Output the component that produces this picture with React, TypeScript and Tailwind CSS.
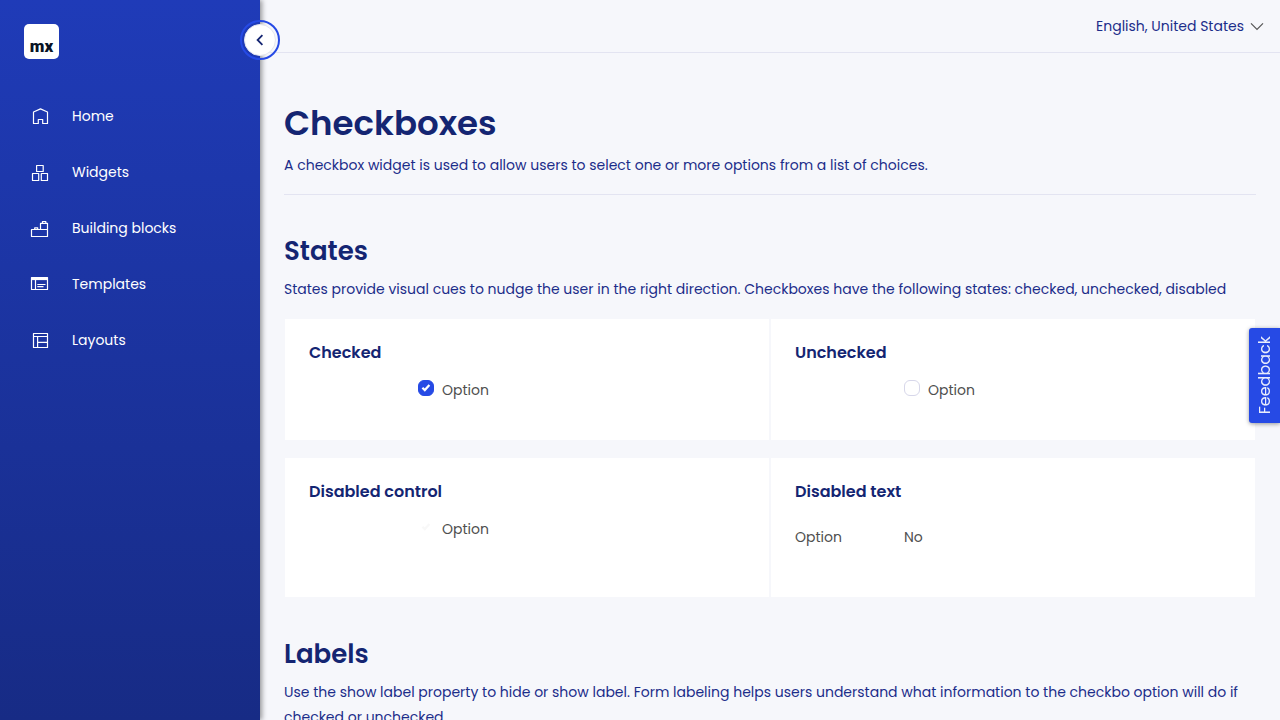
import { useState } from 'react';
import type { ReactNode } from 'react';

function NavIcon({ children }: { children: ReactNode }) {
  return (
    <svg
      viewBox="0 0 20 20"
      className="h-5 w-5 shrink-0"
      fill="none"
      stroke="currentColor"
      strokeWidth="1.2"
      strokeLinejoin="round"
      aria-hidden="true"
    >
      {children}
    </svg>
  );
}

const navItems: { label: string; icon: ReactNode }[] = [
  {
    label: 'Home',
    icon: <path d="M3.5 17.5V6L10.5 2.9L17.5 6V17.5H12.7V13.5H8.3V17.5Z" />,
  },
  {
    label: 'Widgets',
    icon: (
      <>
        <rect x="6.6" y="3.5" width="6.6" height="6" />
        <rect x="2.5" y="11.5" width="6.2" height="7" />
        <rect x="11.3" y="11.5" width="6.2" height="7" />
      </>
    ),
  },
  {
    label: 'Building blocks',
    icon: (
      <>
        <path d="M1.5 11.5H17.5V18.5H1.5Z" />
        <path d="M4.7 11.5V9.8H7.7V11.5" />
        <path d="M10.5 11.5V5.3H17.5V11.5" />
        <path d="M12.5 5.2V3.5H15.8V5.2" />
      </>
    ),
  },
  {
    label: 'Templates',
    icon: (
      <>
        <rect x="1.5" y="3.5" width="16" height="12" />
        <path d="M1.5 4.8H17.5" strokeWidth="2.6" />
        <path d="M5.5 6V15.5M7.3 10.5H15.5M7.3 12.7H13.5" />
      </>
    ),
  },
  {
    label: 'Layouts',
    icon: <path d="M3.5 3.5H17.5V17.5H3.5ZM3.5 6.5H17.5M7.6 6.5V17.5M7.6 12.3H17.5" />,
  },
];

function Card({ title, children }: { title: string; children: ReactNode }) {
  return (
    <section className="border border-[#f6f7fb] bg-white bg-clip-padding p-6">
      <h3 className="mb-[17px] text-base leading-5 font-semibold text-[#142572]">{title}</h3>
      {children}
    </section>
  );
}

function CheckOption({ id, initial, disabled = false }: { id: string; initial: boolean; disabled?: boolean }) {
  const [checked, setChecked] = useState(initial);
  return (
    <div className="mb-4 flex items-start pl-[25%]">
      <span className="grid h-4 w-4 place-items-center">
        <input
          id={id}
          type="checkbox"
          checked={checked}
          disabled={disabled}
          onChange={(event) => setChecked(event.target.checked)}
          className="peer col-start-1 row-start-1 h-4 w-4 appearance-none rounded-md border border-[#d7d7ea] bg-white checked:border-[#264ae5] checked:bg-[#264ae5] disabled:border-white disabled:bg-white"
        />
        <svg
          viewBox="0 0 16 16"
          className="pointer-events-none invisible col-start-1 row-start-1 h-4 w-4 text-white peer-checked:visible peer-disabled:text-[#f8f8f8]"
          fill="none"
          stroke="currentColor"
          strokeWidth="2.2"
          aria-hidden="true"
        >
          <path d="M4.4 7.7L6.8 10.1L11.4 5" />
        </svg>
      </span>
      <label htmlFor={id} className="pl-2 leading-5 text-[#4f4f4f]">
        Option
      </label>
    </div>
  );
}

export default function App() {
  const [open, setOpen] = useState(true);
  return (
    <div className="flex h-screen overflow-hidden bg-[#f6f7fb] font-['Poppins','Inter',sans-serif] text-sm leading-[25px] text-[#1c2d8a]">
      <aside
        className={`${open ? 'w-[260px]' : 'w-20'} relative z-10 shrink-0 bg-linear-to-b from-[#1f3bb8] to-[#172b85] text-white shadow-[2px_0_5px_rgba(0,0,0,0.4)]`}
      >
        <div className="px-6 pt-6 pb-[29px]">
          <div className="flex h-[35px] w-[35px] items-end justify-center rounded-[5px] bg-white pb-[3px] font-['Roboto',sans-serif] text-[17px] leading-5 font-black text-[#0a1325]">
            mx
          </div>
        </div>
        <nav>
          {navItems.map((item) => (
            <a key={item.label} href="#" className="flex h-14 items-center gap-[22px] pl-[30px]">
              <NavIcon>{item.icon}</NavIcon>
              {open && item.label}
            </a>
          ))}
        </nav>
        <button
          type="button"
          aria-label="Toggle sidebar"
          onClick={() => setOpen(!open)}
          className="absolute top-6 -right-4 flex h-8 w-8 items-center justify-center rounded-full border border-[#e4e6ef] bg-white text-[#142572] outline-2 outline-offset-2 outline-[#264ae5]"
        >
          <svg viewBox="0 0 16 16" className="h-4 w-4" fill="none" stroke="currentColor" strokeWidth="1.8" aria-hidden="true">
            <path d="M10.4 3.2L5.6 8L10.4 12.8" />
          </svg>
        </button>
      </aside>

      <div className="flex min-w-0 grow flex-col">
        <header className="flex h-[53px] shrink-0 items-center justify-end border-b border-[#e3e4f1] px-4">
          <button type="button" className="flex items-center gap-1.5">
            English, United States
            <svg viewBox="0 0 14 14" className="h-3.5 w-3.5 text-[#555]" fill="none" stroke="currentColor" strokeWidth="1.2" aria-hidden="true">
              <path d="M1 4.3L7 10.3L13 4.3" />
            </svg>
          </button>
        </header>

        <main className="min-h-0 grow overflow-y-auto px-6 pt-[47px] [scrollbar-width:none]">
          <div className="border-b border-[#e3e4f1] pb-4">
            <h1 className="mb-[7px] text-[34px] leading-[46px] font-semibold text-[#142572]">Checkboxes</h1>
            <p>A checkbox widget is used to allow users to select one or more options from a list of choices.</p>
          </div>

          <h2 className="mt-[38px] mb-2 text-[26px] leading-9 font-semibold text-[#142572]">States</h2>
          <p>
            States provide visual cues to nudge the user in the right direction. Checkboxes have the following states:
            checked, unchecked, disabled
          </p>
          <div className="mt-4 grid grid-cols-2 gap-y-4">
            <Card title="Checked">
              <CheckOption id="option-checked" initial={true} />
            </Card>
            <Card title="Unchecked">
              <CheckOption id="option-unchecked" initial={false} />
            </Card>
            <Card title="Disabled control">
              <CheckOption id="option-disabled" initial={true} disabled />
            </Card>
            <Card title="Disabled text">
              <dl className="mb-4 flex pt-2 pb-2.5 leading-5 text-[#4f4f4f]">
                <dt className="w-1/4">Option</dt>
                <dd>No</dd>
              </dl>
            </Card>
          </div>

          <h2 className="mt-[38px] mb-2 text-[26px] leading-9 font-semibold text-[#142572]">Labels</h2>
          <p>
            Use the show label property to hide or show label. Form labeling helps users understand what information to
            the checkbo option will do if checked or unchecked.
          </p>
        </main>
      </div>

      <button
        type="button"
        className="fixed top-[328px] right-0 z-20 flex h-[95px] w-[31px] items-center justify-center rounded-l-[3px] bg-[#264ae5] text-base leading-5 text-[#e9edfc] shadow-[0_1px_4px_rgba(0,0,0,0.4)]"
      >
        <span className="rotate-180 [writing-mode:vertical-rl]">Feedback</span>
      </button>
    </div>
  );
}
